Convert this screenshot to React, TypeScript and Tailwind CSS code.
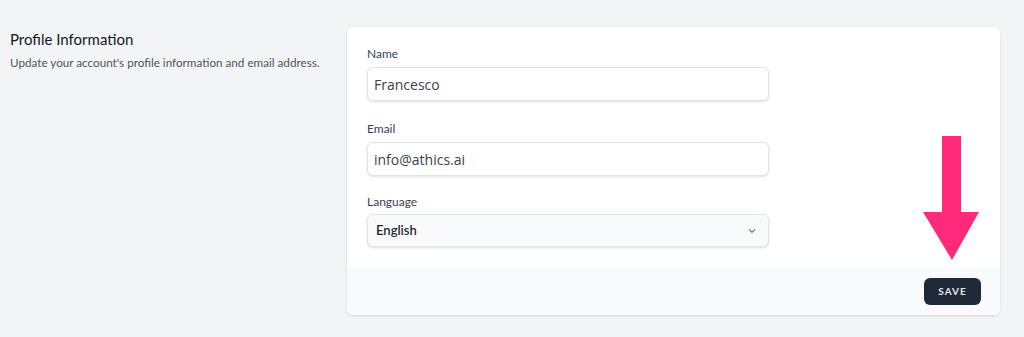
import React from "react";

function Field({ label, children, first }: { label: string; children: React.ReactNode; first?: boolean }) {
  return (
    <div className={first ? "" : "mt-[20px]"}>
      <label className="block text-[12px] leading-[16px] text-[#374151]">{label}</label>
      <div className="mt-[5px]">{children}</div>
    </div>
  );
}

export default function App() {
  return (
    <div
      className="relative flex h-[337px] w-[1024px] bg-[#f3f4f6] pt-[27px] pl-[10px]"
      style={{ fontFamily: "Lato, 'Noto Sans', sans-serif" }}
    >
      <div className="w-[337px] pt-[3px]">
        <h3 className="text-[15px] leading-[18px] font-normal text-[#111827]">Profile Information</h3>
        <p className="mt-[6px] text-[11.7px] leading-[16px] text-[#4b5563]">
          Update your account's profile information and email address.
        </p>
      </div>

      <div className="flex h-[288px] w-[653px] flex-col overflow-hidden rounded-md bg-white shadow">
        <div className="flex-1 px-[20px] pt-[19px]">
          <Field label="Name" first>
            <div
              className="flex h-[34px] w-[402px] items-center rounded-md border border-[#e0e3e8] bg-white px-[6px] text-[14px] text-[#374151] shadow-sm"
              style={{ fontFamily: "'Open Sans', sans-serif" }}
            >
              Francesco
            </div>
          </Field>
          <Field label="Email">
            <div
              className="flex h-[34px] w-[402px] items-center rounded-md border border-[#e0e3e8] bg-white px-[6px] text-[14px] text-[#374151] shadow-sm"
              style={{ fontFamily: "'Open Sans', sans-serif" }}
            >
              info@athics.ai
            </div>
          </Field>
          <div className="mt-[18px]">
            <label className="block text-[12px] leading-[16px] text-[#374151]">Language</label>
            <div className="mt-[4px] flex h-[33px] w-[402px] items-center justify-between rounded-md border border-[#e0e3e8] bg-[#f9fafb] pl-[8px] pr-[9px] text-[13px] font-semibold text-[#1f2937] shadow-sm">
              <span>English</span>
              <svg width="14" height="14" viewBox="0 0 20 20" fill="none">
                <path d="M6 8l4 4 4-4" stroke="#6b7280" strokeWidth="1.6" strokeLinecap="round" strokeLinejoin="round" />
              </svg>
            </div>
          </div>
        </div>
        <div className="flex h-[48px] items-center justify-end bg-[#f9fafb] pr-[19px]">
          <button className="h-[27px] w-[57px] rounded-md bg-[#1f2937] text-[10px] font-bold tracking-[0.1em] text-[#e5e7eb]">
            SAVE
          </button>
        </div>
      </div>

      <svg className="absolute left-[923px] top-[136px]" width="57" height="125" viewBox="0 0 57 125">
        <polygon points="19,0 38,0 38,76 56,76 29,124 0,76 19,76" fill="#ff2b7a" />
      </svg>
    </div>
  );
}
